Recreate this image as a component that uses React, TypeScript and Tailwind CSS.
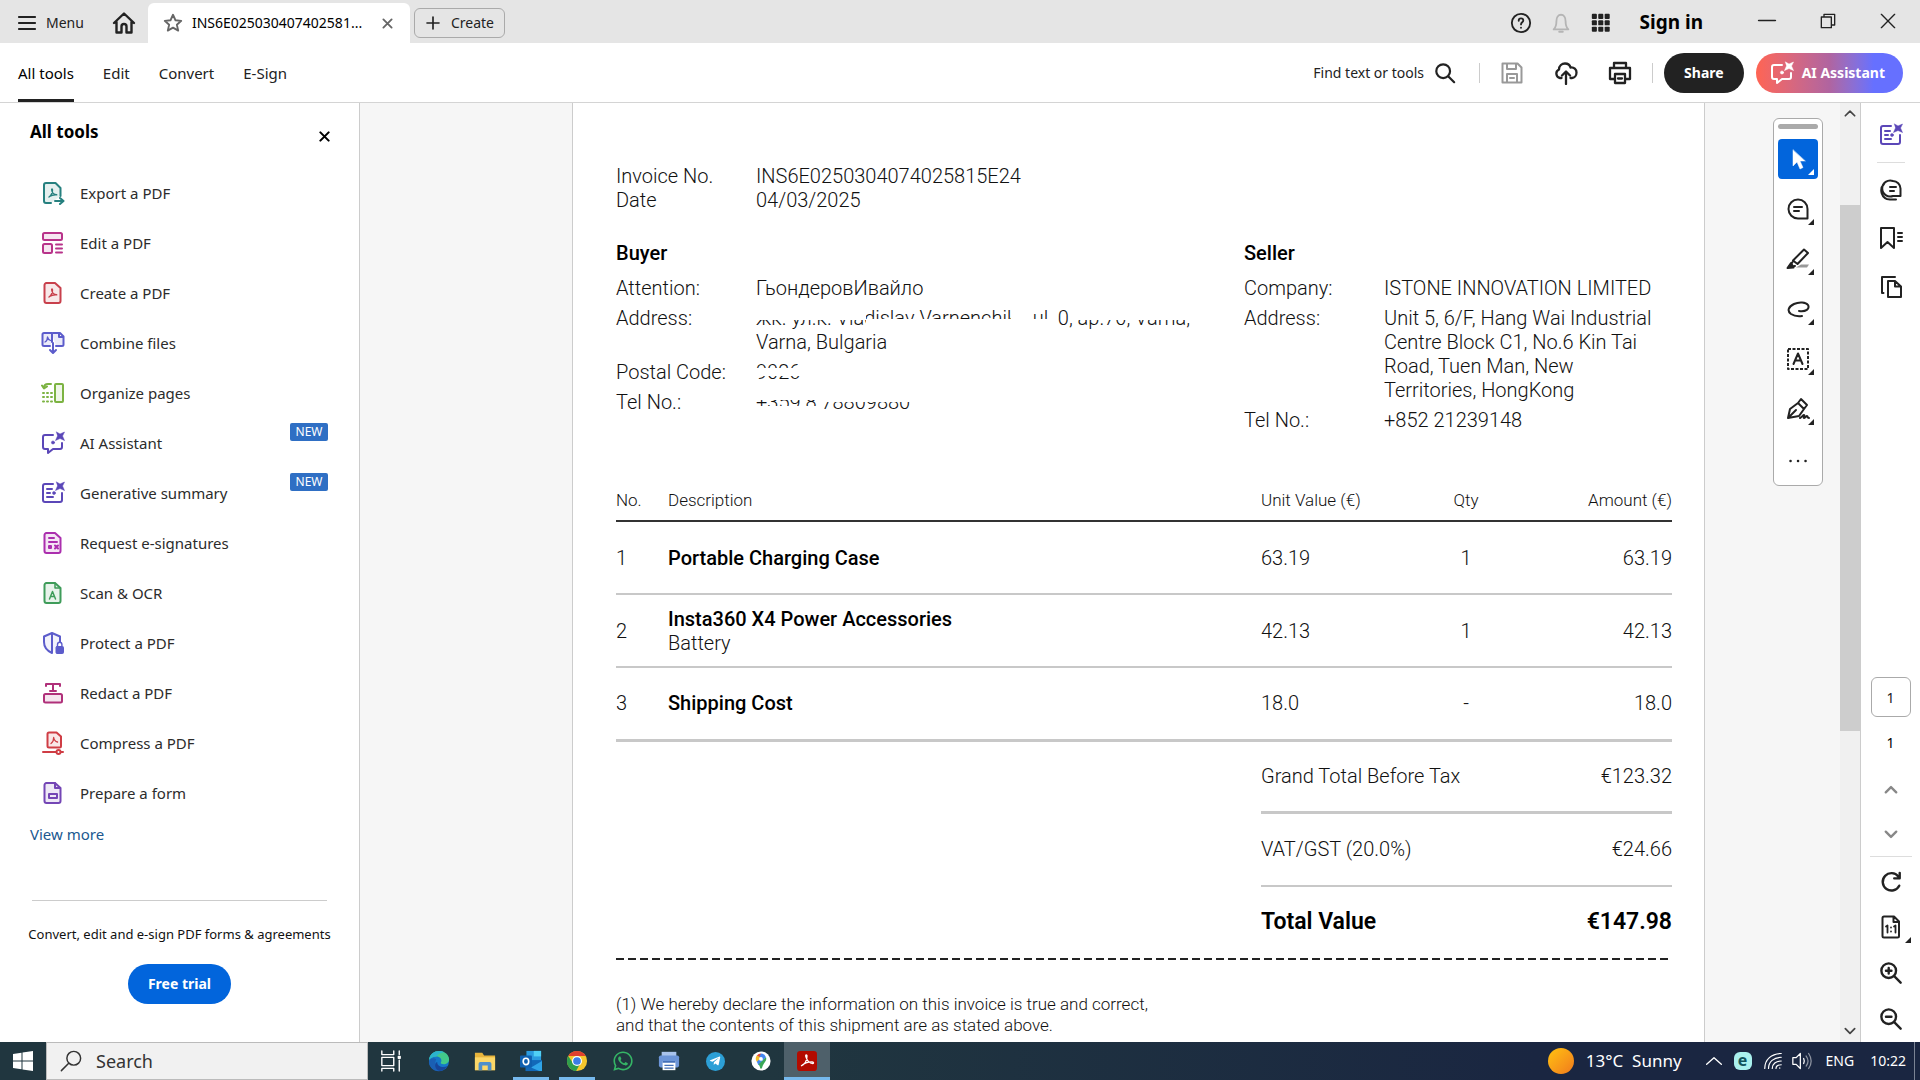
import type { ReactNode } from 'react';
import { FaWhatsapp, FaTelegramPlane } from 'react-icons/fa';

type IconProps = { className?: string; children: ReactNode; sw?: number };

const Svg = ({ className = 'size-6', children, sw = 2 }: IconProps) => (
	<svg
		viewBox="0 0 24 24"
		fill="none"
		stroke="currentColor"
		strokeWidth={sw}
		strokeLinecap="round"
		strokeLinejoin="round"
		className={`shrink-0 ${className}`}
		aria-hidden="true"
	>
		{children}
	</svg>
);

const trefoil = 'M8 16c2-1.5 3.5-4.5 3.5-7 0-1.5-1-1.5-.8 0 .3 2.5 2.5 4.5 5 4.8M8.5 15.5c2-1.4 4.5-1.9 7.2-1.7';
const spark = 'M15.5 1 19 3l4.5-2L21.500 5l2 4.500L19 7.500 14.500 9.500l2-4.500z';

const DocShape = () => <path d="M5 2h9l5.5 5v13a2 2 0 0 1-2 2h-12a2 2 0 0 1-2-2V4a2 2 0 0 1 2-2z" fill="currentColor" fillOpacity="0.12" />;

const AssistantShape = () => (
	<>
		<path d="M12 4H4a2 2 0 0 0-2 2v10a2 2 0 0 0 2 2h3v4l5-4h7a2 2 0 0 0 2-2v-4" />
		<path d={spark} fill="currentColor" strokeWidth="0.5" />
		<circle cx="12" cy="11.5" r="1.6" fill="currentColor" strokeWidth="0.5" />
	</>
);

const SummaryShape = () => (
	<>
		<path d="M12 3H4a2 2 0 0 0-2 2v14a2 2 0 0 0 2 2h15a2 2 0 0 0 2-2v-7" />
		<path d="M6 8h5M6 12h3M6 16h6" />
		<path d={spark} fill="currentColor" strokeWidth="0.5" />
		<circle cx="13" cy="12" r="1.5" fill="currentColor" strokeWidth="0.5" />
	</>
);

const tools: { label: string; color: string; badge?: boolean; icon: ReactNode }[] = [
	{
		label: 'Export a PDF',
		color: 'text-[#26807f]',
		icon: (
			<>
				<path d="M19.5 15V7l-5-5H5a2 2 0 0 0-2 2v16a2 2 0 0 0 2 2h5" fill="currentColor" fillOpacity="0.12" />
				<path d={trefoil} strokeWidth="1.4" />
				<path d="M14 20h8M19 17l3.5 3L19 23" />
			</>
		),
	},
	{
		label: 'Edit a PDF',
		color: 'text-[#b8338a]',
		icon: (
			<>
				<rect x="2" y="2" width="19" height="7" rx="1.5" fill="currentColor" fillOpacity="0.12" />
				<rect x="2" y="13" width="9" height="9" rx="1.5" fill="currentColor" fillOpacity="0.12" />
				<path d="M15 13.5h6M15 17.5h6M15 21.5h6" />
			</>
		),
	},
	{ label: 'Create a PDF', color: 'text-[#c8404c]', icon: (<><DocShape /><path d={trefoil} strokeWidth="1.4" /></>) },
	{
		label: 'Combine files',
		color: 'text-[#5c5ccb]',
		icon: (
			<>
				<path d="M9 15H3a1.5 1.5 0 0 1-1.5-1.5v-10A1.5 1.5 0 0 1 3 2h8v9M11 2.5c0-.3.5-.5 1-.5h7l3.5 3.5v8A1.5 1.5 0 0 1 21 15h-6M18 2v4h4" fill="currentColor" fillOpacity="0.12" />
				<path d="M4 11c2-1 2.5-3 2.5-5 .5 2 1.5 3 3 3.5" strokeWidth="1.3" />
				<path d="M12 12v9M9 19l3 3 3-3" />
			</>
		),
	},
	{
		label: 'Organize pages',
		color: 'text-[#7cb342]',
		icon: (
			<>
				<rect x="14" y="3" width="8" height="18" rx="1" fill="currentColor" fillOpacity="0.12" />
				<path d="M10 3H7C4.5 3 3 4.5 3 7M1 4.5l2 3 3-2" />
				<path d="M2 12h9M2 16h9M2 20.5h9" strokeDasharray="1 3" />
			</>
		),
	},
	{ label: 'AI Assistant', color: 'text-[#5b47b8]', badge: true, icon: <AssistantShape /> },
	{ label: 'Generative summary', color: 'text-[#5b47b8]', badge: true, icon: <SummaryShape /> },
	{
		label: 'Request e-signatures',
		color: 'text-[#ab2fae]',
		icon: (<><DocShape /><path d="M8 7h5M8 11h8M8 15v2h2v-2zM14 14.5l3 3M17 14.5l-3 3" /></>),
	},
	{
		label: 'Scan & OCR',
		color: 'text-[#3f9c5a]',
		icon: (<><DocShape /><path d="M14 2v5h5M8.5 18 11.5 10.5 14.5 18M9.5 15.5h4" strokeWidth="1.5" /></>),
	},
	{
		label: 'Protect a PDF',
		color: 'text-[#5c5ccb]',
		icon: (
			<>
				<path d="M11 22C5.5 19.5 3 16 3 11V5.5L11 2l8 3.5V11M11 2v20" fill="currentColor" fillOpacity="0.08" />
				<rect x="15" y="15.5" width="7.5" height="7" rx="1" fill="currentColor" strokeWidth="1" />
				<path d="M16.5 15v-1.5a2.2 2.2 0 0 1 4.4 0V15" strokeWidth="1.4" />
			</>
		),
	},
	{
		label: 'Redact a PDF',
		color: 'text-[#b0307a]',
		icon: (<><path d="M5 5V3h14v2M12 3v7M9 10h6" /><rect x="3" y="13" width="18" height="8.5" rx="1.5" fill="currentColor" fillOpacity="0.12" /></>),
	},
	{
		label: 'Compress a PDF',
		color: 'text-[#cf3d45]',
		icon: (
			<>
				<path d="M8 1.5h7.5L20 5.5V15a1.5 1.5 0 0 1-1.5 1.5H8A1.5 1.5 0 0 1 6.5 15V3A1.5 1.5 0 0 1 8 1.5z" fill="currentColor" fillOpacity="0.12" />
				<path d="M10 12.5c2-1.5 2.7-3.5 2.7-6 .3 2.5 1.8 4 3.8 4.5" strokeWidth="1.3" />
				<path d="M2 21h13M20 21h2" />
				<circle cx="17.5" cy="21" r="2" />
			</>
		),
	},
	{ label: 'Prepare a form', color: 'text-[#7446b5]', icon: (<><DocShape /><path d="M14 2v5h5M8 13h8v4H8z" /></>) },
];

const menuTabs = ['Edit', 'Convert', 'E-Sign'];

const quickTools: { label: string; icon: ReactNode }[] = [
	{ label: 'Comment', icon: <path d="M12 2.5a9.5 9.5 0 1 0 0 19h9.500V12A9.5 9.5 0 0 0 12 2.5zM8 10h8M8 14h5" /> },
	{
		label: 'Highlight',
		icon: (
			<>
				<path d="M10 20.5h11l2-3h-8z" fill="#999" stroke="none" />
				<path d="M18 2.5 22 6 11.5 17 7 13.5zM6.5 15l-3.5 5 6-1" />
				<path d="M5 16l-3.5 5 6-.5z" fill="currentColor" />
			</>
		),
	},
	{ label: 'Draw', icon: <path d="M13 14c7 1 11-2 9-6-2-3-9-3.5-14-1-6 3-7 7-3 10 3 2 7 2.5 11 2" /> },
	{
		label: 'Add text box',
		icon: (
			<>
				<rect x="2" y="2" width="20" height="20" strokeDasharray="3 1.5" strokeLinecap="butt" />
				<path d="M7.500 17 12 6.500 16.500 17M9 13.500h6" />
			</>
		),
	},
	{ label: 'Sign', icon: <path d="M2 21 4 12l8-6 6 6-5 7-11 2zM2 21l8-8M12 6l3-4 6 6-3 4M14 21c2-1 3-3 4-3s-1 3 0 3 2-2 3-2 0 2 2 2" /> },
];

const items = [
	{ no: 1, name: 'Portable Charging Case', note: '', unit: '63.19', qty: '1', amount: '63.19' },
	{ no: 2, name: 'Insta360 X4 Power Accessories', note: 'Battery', unit: '42.13', qty: '1', amount: '42.13' },
	{ no: 3, name: 'Shipping Cost', note: '', unit: '18.0', qty: '-', amount: '18.0' },
];

const TitleBar = () => (
	<header className="flex h-[43px] shrink-0 items-center bg-[#e5e5e5] pt-0.5 text-[#222]">
		<button className="ml-[18px] flex items-center gap-2.5 text-sm">
			<Svg className="size-[18px]" sw={2.4}><path d="M1 4h22M1 12h22M1 20h22" /></Svg>
			Menu
		</button>
		<button aria-label="Home" className="ml-7">
			<Svg sw={2.4}><path d="M2 12 12 2.500 22 12M4.500 10.500V21.500h5v-6a2.500 2.500 0 0 1 5 0v6h5V10.500" /></Svg>
		</button>
		<div className="ml-3 flex h-10 w-[262px] items-center self-end rounded-t-md bg-white pl-3.5">
			<Svg className="size-[22px] text-[#666]"><path d="m12 3 2.700 6 6.300.600-4.800 4.300 1.500 6.400L12 17l-5.700 3.300 1.500-6.400L3 9.600 9.300 9z" /></Svg>
			<span className="ml-2 w-[186px] text-sm whitespace-nowrap text-black">INS6E025030407402581...</span>
			<button aria-label="Close tab" className="ml-1 text-[#666]">
				<Svg className="size-[11px]" sw={4}><path d="M3 3l18 18M21 3 3 21" /></Svg>
			</button>
		</div>
		<button className="ml-1 flex h-[30px] items-center gap-2.5 rounded-md border border-[#aaa] px-2.5 text-sm">
			<Svg className="size-4" sw={2.5}><path d="M12 3v18M3 12h18" /></Svg>
			Create
		</button>
		<div className="ml-auto flex items-center">
			<button aria-label="Help"><Svg className="size-[22px]"><circle cx="12" cy="12" r="10" /><path d="M9.500 9.500c0-3.500 5-3.200 5-.300 0 2-2.500 2-2.500 4.300M12 17v.200" /></Svg></button>
			<button aria-label="Notifications" className="ml-[18px] text-[#b5b5b5]"><Svg className="size-[22px]"><path d="M4 19c2-2 3-4 3-9 0-4 2-7 5-7s5 3 5 7c0 5 1 7 3 9zM10 21.500h4" /></Svg></button>
			<button aria-label="Apps" className="ml-[18px]">
				<Svg className="size-[22px]">
					{[2, 9, 16].map((y) => [2, 9, 16].map((x) => <rect key={`${x}-${y}`} x={x} y={y} width="5.5" height="5.5" rx="1" fill="currentColor" stroke="none" />))}
				</Svg>
			</button>
			<button className="ml-7 text-[19px] font-bold text-black">Sign in</button>
			<button aria-label="Minimise" className="ml-[54px]"><Svg className="size-5"><path d="M2 9h20" /></Svg></button>
			<button aria-label="Restore" className="mb-1 ml-[43px]"><Svg className="size-4"><path d="M2 6h15v16H2zM6 6V2h16v16h-5" /></Svg></button>
			<button aria-label="Close" className="mr-6 mb-1 ml-11"><Svg className="size-4"><path d="M2 2l20 20M22 2 2 22" /></Svg></button>
		</div>
	</header>
);

const Toolbar = () => (
	<nav className="flex h-[60px] shrink-0 items-center border-b border-[#d4d4d4] bg-white text-[15px] text-[#222]">
		<div className="ml-[18px] flex h-full gap-[29px]">
			<button className="border-b-3 border-[#222] pt-1 text-black">All tools</button>
			{menuTabs.map((tab) => (
				<button key={tab} className="pt-px">{tab}</button>
			))}
		</div>
		<div className="mr-[17px] ml-auto flex items-center">
			<button className="flex items-center gap-2.5 text-sm">
				Find text or tools
				<Svg className="size-[22px]" sw={2.4}><circle cx="10" cy="10" r="7.5" /><path d="m16 16 6 6" /></Svg>
			</button>
			<span className="mr-5 ml-[23px] h-5 w-px bg-[#ccc]" />
			<button aria-label="Save" className="text-[#999]"><Svg><path d="M2.500 2.500h15l4 4v15h-19zM7 3v5h9V3M7 21v-8h10v8M10 17h4" /></Svg></button>
			<button aria-label="Upload" className="ml-[30px]"><Svg sw={2.3}><path d="M7.500 17H6a4.500 4.500 0 0 1-1-8.500C5 4.500 8 2.500 11 2.500s5 2 5.500 4C20 6 22.500 8.500 22.500 11.500S20.500 17 18 17h-1.500M12 23V11M8 14.500l4-4 4 4" /></Svg></button>
			<button aria-label="Print" className="ml-[30px]"><Svg sw={2.3}><path d="M6 7V2h12v5M6 18H2V7h20v11h-4M7 13h10v9H7zM10 17.500h4" /></Svg></button>
			<span className="mr-[11px] ml-5 h-5 w-px bg-[#ccc]" />
			<button className="h-10 rounded-full bg-[#222] px-5 text-sm font-bold text-white">Share</button>
			<button className="ml-3 flex h-10 items-center gap-2 rounded-full bg-linear-to-r from-[#ff6452] via-[#b064a0] via-50% to-[#6670ff] to-80% pr-[18px] pl-3.5 text-sm font-bold whitespace-nowrap text-white">
				<Svg><AssistantShape /></Svg>
				AI Assistant
			</button>
		</div>
	</nav>
);

const Sidebar = () => (
	<aside className="flex w-[360px] shrink-0 flex-col border-r border-[#ccc] bg-white">
		<div className="flex h-[65px] items-center justify-between pr-[29px] pb-[7px] pl-[30px]">
			<h2 className="text-[17px] font-bold text-black">All tools</h2>
			<button aria-label="Close panel" className="mt-2"><Svg className="size-[11px]" sw={4.5}><path d="M3 3l18 18M21 3 3 21" /></Svg></button>
		</div>
		<ul>
			{tools.map((tool) => (
				<li key={tool.label}>
					<button className="flex h-[50px] w-full items-center pr-[31px] pl-[41px] text-[15px] text-[#2c2c2c]">
						<Svg className={`size-6 ${tool.color}`}>{tool.icon}</Svg>
						<span className="ml-[15px]">{tool.label}</span>
						{tool.badge && (
							<span className="mb-[22px] ml-auto flex h-[18px] w-[38px] items-center justify-center rounded-xs bg-[#2f6fc4] text-xs text-white">NEW</span>
						)}
					</button>
				</li>
			))}
		</ul>
		<a href="#more" className="ml-[30px] self-start pt-[5px] text-[15px] text-[#20588f]">View more</a>
		<div className="mx-8 mt-[54px] flex flex-col items-center border-t border-[#ccc] pt-6">
			<p className="text-[13px] whitespace-nowrap text-[#111]">Convert, edit and e-sign PDF forms & agreements</p>
			<button className="mt-5 h-10 rounded-full bg-[#0265dc] px-5 text-sm font-bold text-white">Free trial</button>
		</div>
	</aside>
);

const Field = ({ label, children }: { label: string; children: ReactNode }) => (
	<div className="flex">
		<dt className="w-[140px] shrink-0">{label}</dt>
		<dd>{children}</dd>
	</div>
);

const Invoice = () => (
	<article className="min-w-0 flex-1 border-x border-[#ccc] bg-white pt-[61px] pr-8 pl-[43px] font-['Roboto','Noto_Sans',sans-serif] text-[20px] leading-6 font-light text-[#111]">
		<dl>
			<Field label="Invoice No.">INS6E0250304074025815E24</Field>
			<Field label="Date">04/03/2025</Field>
		</dl>
		<div className="mt-[29px] flex justify-between">
			<section>
				<h3 className="font-medium text-black">Buyer</h3>
				<dl className="mt-[11px] space-y-1.5">
					<Field label="Attention:">ГьондеровИвайло</Field>
					<Field label="Address:">
						<span className="relative block whitespace-nowrap">
							жк. ул.к. Vladislav Varnenchik bul. 0, ap.70, Varna,
							<span className="absolute top-0 left-0 h-3.5 w-[110px] bg-white" />
							<span className="absolute bottom-0 left-[110px] h-[11px] w-[190px] bg-white" />
							<span className="absolute top-0 left-[320px] h-3.5 w-[140px] bg-white" />
							<span className="absolute top-0 left-[255px] h-6 w-[22px] bg-white" />
						</span>
						Varna, Bulgaria
					</Field>
					<Field label="Postal Code:">
						<span className="relative block">
							9026
							<span className="absolute top-2 left-0 h-2 w-12 bg-white" />
						</span>
					</Field>
					<Field label="Tel No.:">
						<span className="relative block">
							+359 8 78809880
							<span className="absolute top-0 left-0 h-2.5 w-16 bg-white" />
							<span className="absolute top-0 left-16 h-3 w-24 bg-white" />
							<span className="absolute bottom-0 left-0 h-2 w-16 bg-white" />
						</span>
					</Field>
				</dl>
			</section>
			<section className="w-[428px] shrink-0 pr-2.5">
				<h3 className="font-medium text-black">Seller</h3>
				<dl className="mt-[11px] space-y-1.5">
					<Field label="Company:">ISTONE INNOVATION LIMITED</Field>
					<Field label="Address:">Unit 5, 6/F, Hang Wai Industrial Centre Block C1, No.6 Kin Tai Road, Tuen Man, New Territories, HongKong</Field>
					<Field label="Tel No.:">+852 21239148</Field>
				</dl>
			</section>
		</div>
		<table className="mt-[47px] w-full table-fixed text-left">
			<colgroup>
				<col className="w-[52px]" />
				<col />
				<col className="w-[139px]" />
				<col className="w-[132px]" />
				<col className="w-[140px]" />
			</colgroup>
			<thead>
				<tr className="h-[42px] border-b-2 border-[#333] text-[17px]">
					<th className="font-light">No.</th>
					<th className="font-light">Description</th>
					<th className="font-light">Unit Value (€)</th>
					<th className="text-center font-light">Qty</th>
					<th className="text-right font-light">Amount (€)</th>
				</tr>
			</thead>
			<tbody>
				{items.map((item) => (
					<tr key={item.no} className="h-[73px] border-b-2 border-[#c8c8c8] last:border-b-3">
						<td>{item.no}</td>
						<td>
							<p className="font-medium text-black">{item.name}</p>
							{item.note && <p>{item.note}</p>}
						</td>
						<td>{item.unit}</td>
						<td className="text-center">{item.qty}</td>
						<td className="text-right">{item.amount}</td>
					</tr>
				))}
			</tbody>
		</table>
		<dl className="ml-auto w-[411px]">
			<div className="flex h-[72px] items-center justify-between border-b-3 border-[#c8c8c8]">
				<dt>Grand Total Before Tax</dt>
				<dd>€123.32</dd>
			</div>
			<div className="flex h-[73px] items-center justify-between border-b-2 border-[#c8c8c8]">
				<dt>VAT/GST (20.0%)</dt>
				<dd>€24.66</dd>
			</div>
			<div className="flex h-[71px] items-center justify-between text-[23px] font-semibold text-black">
				<dt>Total Value</dt>
				<dd>€147.98</dd>
			</div>
		</dl>
		<div className="h-0.5 bg-[repeating-linear-gradient(90deg,#222_0_8px,transparent_8px_12px)]" />
		<p className="mt-[34px] text-[17px] leading-[21px]">
			(1) We hereby declare the information on this invoice is true and correct,
			<br />
			and that the contents of this shipment are as stated above.
		</p>
	</article>
);

const Corner = () => <span className="absolute right-1 bottom-1 border-3 border-transparent border-r-current border-b-current" />;

const QuickTools = () => (
	<div className="absolute top-[15px] right-[17px] flex w-[50px] flex-col items-center rounded-md border border-[#aaa] bg-white text-[#222]">
		<span className="mt-[5px] h-[5px] w-10 rounded-full bg-[#aaa]" />
		<button aria-label="Select" className="relative mt-2.5 flex size-10 items-center justify-center rounded-sm bg-[#0265dc] text-white">
			<Svg><path d="M7 3v16l4-4 3 7 3-1.500-3-6.500h5z" fill="currentColor" strokeWidth="0.5" /></Svg>
			<Corner />
		</button>
		<div className="mt-2.5 flex flex-col gap-2.5 pb-1.5">
			{quickTools.map((tool) => (
				<button key={tool.label} aria-label={tool.label} className="relative flex size-10 items-center justify-center">
					<Svg>{tool.icon}</Svg>
					<Corner />
				</button>
			))}
			<button aria-label="More" className="flex size-10 items-center justify-center pt-1">
				<Svg className="size-5" sw={3}><path d="M3 12h.100M12 12h.100M21 12h.100" /></Svg>
			</button>
		</div>
	</div>
);

const ScrollBar = () => (
	<div className="flex w-5 shrink-0 flex-col items-center bg-[#f0f0f0] text-[#444]">
		<Svg className="mt-1 mb-1 size-3.5" sw={3}><path d="m4 15 8-8 8 8" /></Svg>
		<div className="mt-20 h-[526px] w-full bg-[#cdcdcd]" />
		<Svg className="mt-auto mb-1 size-3.5" sw={3}><path d="m4 8 8 8 8-8" /></Svg>
	</div>
);

const RightRail = () => (
	<aside className="flex w-[60px] shrink-0 flex-col items-center border-l border-[#ccc] bg-white text-[#222]">
		<button aria-label="Summary" className="mt-5 text-[#5b47b8]"><Svg><SummaryShape /></Svg></button>
		<span className="mt-[15px] h-px w-7 bg-[#ddd]" />
		<button aria-label="Comments" className="mt-[15px]">
			<Svg><path d="M14 3a8 8 0 1 0 0 15h7.500v-7.500A7.800 7.800 0 0 0 14 3zM11 9h6M11 13h4M5 6c-5 5-3 15 6 15.500h6" /></Svg>
		</button>
		<button aria-label="Bookmarks" className="mt-6"><Svg><path d="M2 2h13v20l-6.500-6L2 22zM19 7h4M19 11h4M19 15h4" /></Svg></button>
		<button aria-label="Pages" className="mt-[25px]"><Svg><path d="M9 6h7l6 5.500V22H9zM16 6v5.500h5.500M4.500 18H3V2h13" /></Svg></button>
		<input aria-label="Page number" defaultValue="1" className="mt-auto size-10 rounded-md border border-[#aaa] text-center text-sm" />
		<span className="mt-4 text-sm text-black">1</span>
		<button aria-label="Previous page" className="mt-[30px] text-[#888]"><Svg className="size-3.5" sw={4}><path d="m3 16 9-9 9 9" /></Svg></button>
		<button aria-label="Next page" className="mt-[30px] text-[#888]"><Svg className="size-3.5" sw={4}><path d="m3 8 9 9 9-9" /></Svg></button>
		<span className="mt-[15px] h-px w-[42px] bg-[#ddd]" />
		<button aria-label="Rotate" className="mt-3.5"><Svg className="size-[22px]" sw={2.6}><path d="M20 6a9.500 9.500 0 1 0 1 10M21.500 2v6h-6" /></Svg></button>
		<button aria-label="Actual size" className="relative mt-[22px]">
			<Svg><path d="M5 1.500h10l5 5V21a1.500 1.500 0 0 1-1.500 1.500H5A1.500 1.500 0 0 1 3.500 21V3A1.500 1.500 0 0 1 5 1.500zM14.500 2v5H20" /><path d="M7 11.500l1.500-1v7M15 11.500l1.500-1v7M12 12.500v.100M12 16.500v.100" strokeWidth="1.8" /></Svg>
			<span className="absolute -right-2 -bottom-1 border-3 border-transparent border-r-current border-b-current" />
		</button>
		<button aria-label="Zoom in" className="mt-[23px]"><Svg className="size-[22px]" sw={2.6}><circle cx="9.5" cy="9.5" r="8" /><path d="m15.500 15.500 7 7M9.500 6.500v6M6.500 9.500h6" /></Svg></button>
		<button aria-label="Zoom out" className="mt-6 mb-3"><Svg className="size-[22px]" sw={2.6}><circle cx="9.5" cy="9.5" r="8" /><path d="m15.500 15.500 7 7M6.500 9.500h6" /></Svg></button>
	</aside>
);

const running = 'mx-[5px] w-9 border-b-3 border-[#76b9ed] pt-[3px]';

const Slot = ({ label, state = 'w-[46px]', children }: { label: string; state?: string; children: ReactNode }) => (
	<button aria-label={label} className={`flex h-full shrink-0 items-center justify-center ${state}`}>
		{children}
	</button>
);

const TaskBar = () => (
	<footer className="flex h-[38px] shrink-0 items-center bg-linear-to-r from-[#20363f] from-40% to-[#1a2641] to-80% text-white">
		<button aria-label="Start" className="flex h-full w-[46px] items-center justify-center">
			<svg viewBox="0 0 20 20" className="size-5" fill="currentColor">
				<path d="M0 3l8.500-1.200v7.700H0zM9.500 1.600 20 0v9.500H9.500zM0 10.500h8.500v7.700L0 17zM9.500 10.500H20V20L9.500 18.400z" />
			</svg>
		</button>
		<label className="mr-px flex h-full w-[322px] items-center border border-[#bbb] bg-[#f1f1f1] pl-[13px] text-[#333]">
			<Svg className="size-[22px]" sw={1.6}><circle cx="15" cy="9" r="7.5" /><path d="M9.500 14.500 1.500 22.500" /></Svg>
			<input aria-label="Search" placeholder="Search" className="ml-3.5 w-60 text-lg outline-none placeholder:text-[#333]" />
		</label>
		<Slot label="Task view" state="w-[47px] pr-1">
			<Svg className="size-[22px]" sw={1.5}><path d="M2 1v4h13V1M2 8h13v9H2zM2 23v-3h13v3M21 1v4M21 11v12" /><path d="M20 7h2v2h-2z" fill="currentColor" /></Svg>
		</Slot>
		<Slot label="Edge">
			<svg viewBox="0 0 24 24" className="size-[22px]">
				<circle cx="12" cy="12" r="11" fill="#1577c9" />
				<path d="M1 11C2 4 7 1 12 1c7 0 11 5 11 9 0 3.500-3 5.500-6 5.500-2 0-3.500-.800-3-1.800C16 10 13 7 9 7c-4 0-7 2-8 4z" fill="#42c98a" />
				<path d="M1 11C2 4 7 1 12 1c2 0 4 .500 6 1.500C13 3 11 5 9 7c-4 0-7 2-8 4z" fill="#2bb3cf" />
				<path d="M9 10c-3 5 1 11 8 12-9 4-16-3-16-9 1-4 5-5 8-3z" fill="#1a5fb4" />
				<path d="M10 13c0 5 6 7 11.500 4.500C19 22 14 23.500 11 22 7 20 7 14 10 13z" fill="#17459a" />
			</svg>
		</Slot>
		<Slot label="File Explorer">
			<svg viewBox="0 0 24 24" className="size-[22px]">
				<path d="M1 3h8l2 3h12v16H1z" fill="#e7b43c" />
				<path d="M1 8h22v14H1z" fill="#fbd768" />
				<path d="M5 22v-7a2 2 0 0 1 2-2h10a2 2 0 0 1 2 2v7h-4v-5H9v5z" fill="#4d8fcb" />
			</svg>
		</Slot>
		<Slot label="Outlook" state={running}>
			<svg viewBox="0 0 24 24" className="size-[22px]">
				<path d="M7 1h16v11H7z" fill="#2a9be0" />
				<path d="M15 1h8v6h-8z" fill="#50d0f5" />
				<path d="M6 11h18v12H6z" fill="#1268b8" />
				<path d="m24 12-12 7 9 4h3z" fill="#2fa4e8" />
				<rect y="6" width="13" height="13" rx="1" fill="#0f60b0" />
				<ellipse cx="6.5" cy="12.5" rx="3" ry="3.5" fill="none" stroke="#fff" strokeWidth="1.8" />
			</svg>
		</Slot>
		<Slot label="Chrome" state={running}>
			<svg viewBox="0 0 24 24" className="size-[22px]">
				<circle cx="12" cy="12" r="11" fill="#f6c72d" />
				<path d="M2.500 6.500A11 11 0 0 1 21.500 6.500H12z" fill="#e0402f" />
				<path d="M2.500 6.500A11 11 0 0 0 11 23l5-9-8 1z" fill="#2f9e4c" />
				<circle cx="12" cy="12" r="5.5" fill="#fff" />
				<circle cx="12" cy="12" r="4.2" fill="#3c7de6" />
			</svg>
		</Slot>
		<Slot label="WhatsApp"><FaWhatsapp className="size-[22px] text-[#35b566]" /></Slot>
		<Slot label="Printer">
			<svg viewBox="0 0 24 24" className="size-[22px]">
				<path d="M4 2h16v6H4z" fill="#a9c3ec" />
				<rect x="1" y="6" width="22" height="13" rx="2" fill="#6c95d8" />
				<path d="M5 12h14v10H5z" fill="#fff" />
				<path d="M5 12h14v2H5zM7 16h10v1.500H7zM7 19h10v1.500H7z" fill="#4470b8" />
			</svg>
		</Slot>
		<Slot label="Telegram">
			<span className="flex size-[19px] items-center justify-center rounded-full bg-[#2c9fd6]"><FaTelegramPlane className="size-3" /></span>
		</Slot>
		<Slot label="Maps">
			<svg viewBox="0 0 24 24" className="size-5">
				<circle cx="12" cy="12" r="11.5" fill="#fff" />
				<path d="M12 3a6.500 6.500 0 0 0-5 2.500l5 4z" fill="#e5493a" />
				<path d="M12 3a6.500 6.500 0 0 1 6 4.500L9 17l-2-4z" fill="#4486f0" />
				<path d="M7 5.500A6.500 6.500 0 0 0 7 13l5-5z" fill="#f4bd2b" />
				<path d="M18 7.500c1.500 5-3 6-5 13.500h-2c0-2-1-3.500-2-5z" fill="#3aa757" />
				<circle cx="12" cy="9.5" r="2.3" fill="#fff" />
			</svg>
		</Slot>
		<Slot label="Acrobat" state="w-[46px] border-b-3 border-[#76b9ed] bg-[#4e606a] pt-[3px]">
			<svg viewBox="0 0 24 24" className="size-5">
				<rect width="24" height="24" rx="4" fill="#b30b00" />
				<path d="M5 18c4-2 7-7 7-12 0-2-2-2-1.500.500C11.500 11 15 15 19 15c1.500 0 1-2-1-2-4 0-10 2-13 5z" fill="none" stroke="#fff" strokeWidth="1.5" />
			</svg>
		</Slot>
		<div className="ml-auto flex h-full items-center">
			<span className="size-[26px] rounded-full bg-linear-to-br from-[#ffc20e] to-[#f07a1c]" />
			<span className="ml-3 text-[17px] whitespace-pre">13°C  Sunny</span>
			<button aria-label="Show hidden icons" className="ml-6"><Svg className="size-4" sw={2}><path d="m1 17 11-10 11 10" /></Svg></button>
			<span className="ml-3 flex size-[18px] items-center justify-center rounded-md bg-[#a9f1ee] pb-0.5 text-base leading-none font-bold text-[#10545c]">e</span>
			<Svg className="ml-3 size-[18px]" sw={1.6}><path d="M1 22C1 10 10 2 23 2M6 22C6 13 13 7 23 7M11 22c0-6 5-10 12-10M16 22c0-3 3-5 7-5M21 21v.500" /></Svg>
			<Svg className="ml-2.5 size-5" sw={1.5}><path d="M1 8h4l5-5v18l-5-5H1zM14 9c1 2 1 4 0 6" /><path d="M17 6c3 4 3 8 0 12M20 3c4 6 4 12 0 18" opacity="0.5" /></Svg>
			<span className="ml-3.5 text-sm">ENG</span>
			<span className="ml-4 text-sm">10:22</span>
			<span className="mr-[5px] ml-2 h-full w-px bg-[#7b8494]" />
		</div>
	</footer>
);

const App = () => (
	<div className="flex h-screen flex-col overflow-hidden bg-[#f6f6f6] font-['Noto_Sans','Open_Sans',sans-serif]">
		<TitleBar />
		<Toolbar />
		<div className="flex min-h-0 flex-1">
			<Sidebar />
			<main className="relative flex min-w-0 flex-1 overflow-hidden pr-[135px] pl-[212px]">
				<Invoice />
				<QuickTools />
			</main>
			<ScrollBar />
			<RightRail />
		</div>
		<TaskBar />
	</div>
);

export default App;
